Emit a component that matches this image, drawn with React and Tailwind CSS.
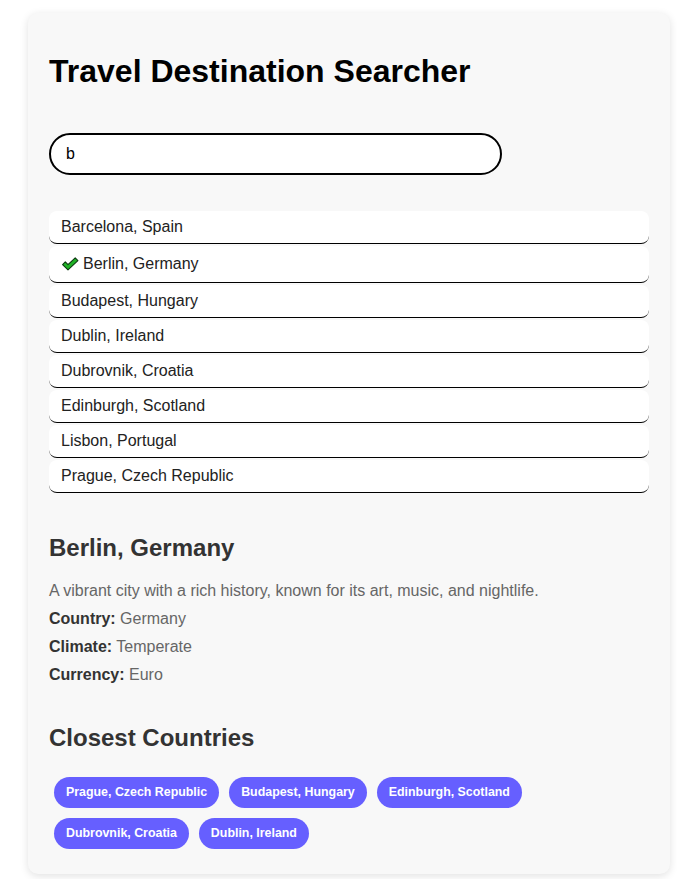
import React from "react";

const items = [
  "Barcelona, Spain",
  "Berlin, Germany",
  "Budapest, Hungary",
  "Dublin, Ireland",
  "Dubrovnik, Croatia",
  "Edinburgh, Scotland",
  "Lisbon, Portugal",
  "Prague, Czech Republic",
];

const chips = [
  "Prague, Czech Republic",
  "Budapest, Hungary",
  "Edinburgh, Scotland",
  "Dubrovnik, Croatia",
  "Dublin, Ireland",
];

function Check() {
  return (
    <svg width="18" height="14" viewBox="0 0 18 14" className="mr-[4px] shrink-0">
      <path
        d="M1.6 7.6 L4.3 4.9 L7 7.6 L14.2 0.9 L16.9 3.6 L7 12.9 Z"
        fill="#1fb326"
        stroke="#0b3a10"
        strokeWidth="1.1"
        strokeLinejoin="round"
      />
    </svg>
  );
}

export default function App() {
  return (
    <div className="min-h-[879px] bg-white pt-[13px] font-['Liberation_Sans',Arial,sans-serif]">
      <div className="ml-[28px] w-[642px] rounded-[10px] bg-[#f8f8f8] px-[21px] pt-[40px] pb-[20px] shadow-[0_2px_8px_rgba(0,0,0,0.12)]">
        <h1 className="text-[32px] leading-[37px] font-bold text-black">
          Travel Destination Searcher
        </h1>
        <input
          type="text"
          defaultValue="b"
          className="mt-[43px] block h-[42px] w-[453px] rounded-full border-2 border-black bg-white px-[15px] text-[16px] text-black outline-none"
        />
        <div className="mt-[36px] flex flex-col gap-[2px]">
          {items.map((it) => {
            const sel = it === "Berlin, Germany";
            return (
              <div
                key={it}
                className={
                  sel
                    ? "flex h-[37px] items-center rounded-lg border-b border-black bg-white pl-[12px] text-[16px] leading-[18px] text-[#222]"
                    : "flex h-[33px] items-center rounded-lg border-b border-black bg-white pl-[12px] text-[16px] leading-[18px] text-[#222]"
                }
              >
                {sel && <Check />}
                <span>{it}</span>
              </div>
            );
          })}
        </div>

        <h2 className="mt-[41px] text-[24px] leading-[28px] font-bold text-[#333]">
          Berlin, Germany
        </h2>
        <div className="mt-[20px] flex flex-col gap-[10px] text-[16px] leading-[18px] text-[#666]">
          <p>A vibrant city with a rich history, known for its art, music, and nightlife.</p>
          <p>
            <span className="font-bold text-[#333]">Country:</span> Germany
          </p>
          <p>
            <span className="font-bold text-[#333]">Climate:</span> Temperate
          </p>
          <p>
            <span className="font-bold text-[#333]">Currency:</span> Euro
          </p>
        </div>

        <h2 className="mt-[40px] text-[24px] leading-[28px] font-bold text-[#333]">
          Closest Countries
        </h2>
        <div className="mt-[20px] flex flex-wrap">
          {chips.map((c) => (
            <span
              key={c}
              className="m-[5px] rounded-[20px] bg-[#665fff] px-[12px] py-[8px] text-[12.4px] leading-[15px] font-bold text-white"
            >
              {c}
            </span>
          ))}
        </div>
      </div>
    </div>
  );
}
